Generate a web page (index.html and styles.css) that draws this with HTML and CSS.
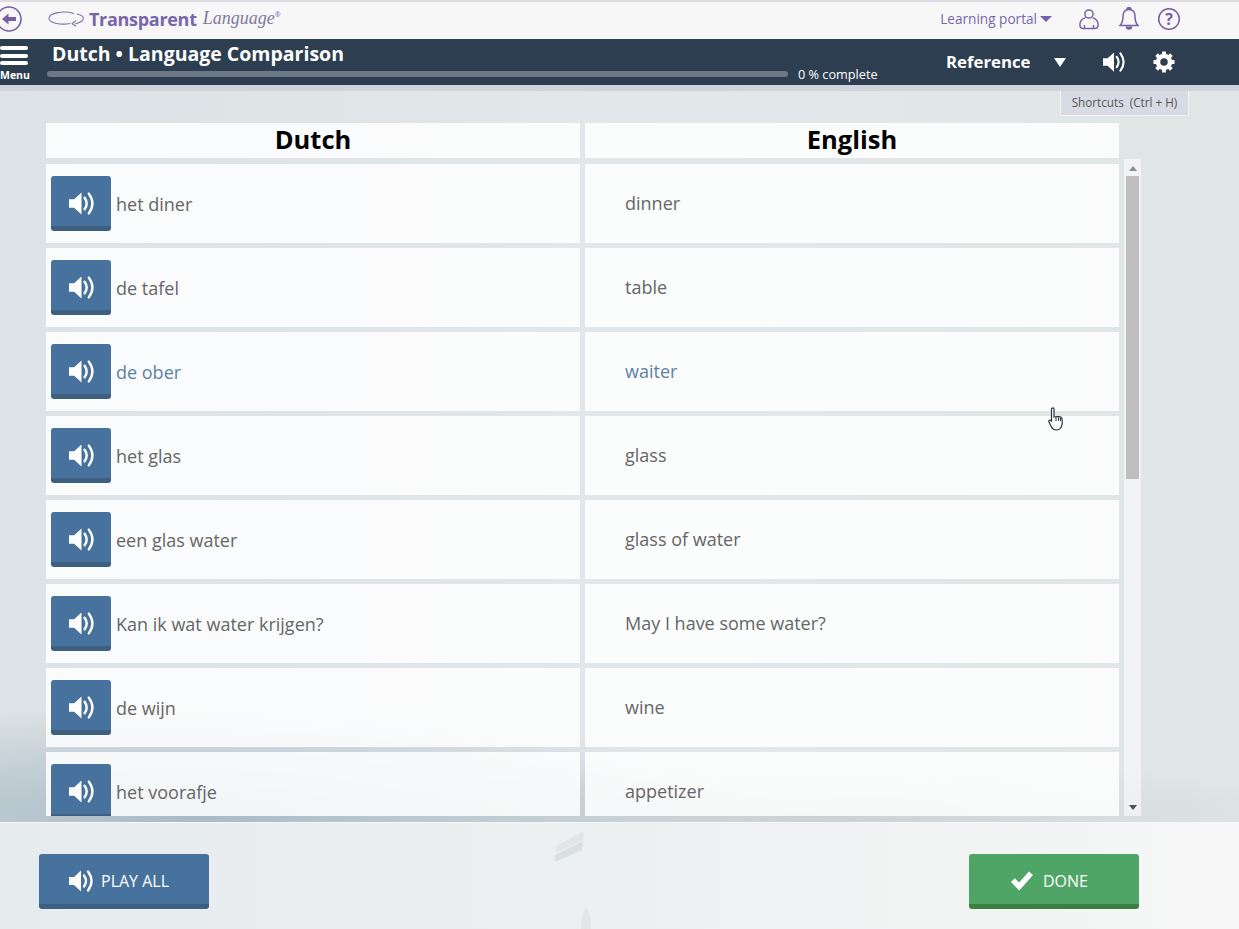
FILE: index.html
```html
<!DOCTYPE html>
<html lang="en">
<head>
	<meta charset="UTF-8">
	<title>Dutch - Language Comparison</title>
	<link rel="stylesheet" href="styles.css">
</head>
<body>
<svg class="defs" width="0" height="0">
	<symbol id="speaker" viewBox="0 0 24 24">
		<path d="M0 8h5l7-6.500v21L5 16H0z" fill="#fff"/>
		<path d="M15 6.500q4 5.500 0 11M19 2.500q7 9.500 0 19" fill="none" stroke="#fff" stroke-width="2.300" stroke-linecap="round"/>
	</symbol>
</svg>
<div class="page">
	<!-- 顶部 -->
	<header class="top">
		<a href="#" class="back">
			<svg width="24" height="28" viewBox="0 0 24 28"><circle cx="9" cy="14" r="12" fill="none" stroke="#7560a8" stroke-width="1.600"/><path d="M2 14l6.500-5.500V12H16v4H8.500v3.500z" fill="#7560a8"/></svg>
		</a>
		<div class="logo">
			<svg width="37" height="16" viewBox="0 0 37 16"><path d="M26 2.500C16-.5 1 1.500 1 7.500c0 5 13 6.500 21 5M29 3c5 1 7 3 6 5.500-1 2-4 3.500-8 4.500M28 9.500l-4 3.300 4 2.500" fill="none" stroke="#7f72ad" stroke-width="1.100"/></svg>
			<span class="logoA">Transparent</span>
			<span class="logoB">Language</span><sup>®</sup>
		</div>
		<div class="topRight">
			<a href="#" class="portal">Learning portal<i class="arrow"></i></a>
			<svg class="user" width="20" height="22" viewBox="0 0 22 24" fill="none" stroke="#7560a8" stroke-width="1.600"><circle cx="11" cy="6.500" r="4.500"/><path d="M7 10.500C3 12 1 14 1 18c0 3 1 4.500 3.500 4.500h13c2.500 0 3.500-1.500 3.500-4.500 0-4-2-6-6-7.500M6 22.500v-4M16 22.500v-4"/></svg>
			<svg class="bell" width="20" height="24" viewBox="0 0 20 24" fill="none" stroke="#7560a8" stroke-width="1.500"><path d="M10 2.500c-4 0-6 3-6 7 0 4-1 7-3 9h18c-2-2-3-5-3-9 0-4-2-7-6-7z"/><path d="M8 2.500a2 2 0 0 1 4 0M7.500 19.500a2.500 2.500 0 0 0 5 0" fill="#7560a8"/></svg>
			<svg class="q" width="24" height="24" viewBox="0 0 24 24"><circle cx="12" cy="12" r="10.300" fill="none" stroke="#7560a8" stroke-width="1.500"/><text x="12" y="17.500" class="help">?</text></svg>
		</div>
	</header>
	<!-- 标题栏 -->
	<div class="bar">
		<a href="#" class="menu"><b></b><b></b><b></b><span>Menu</span></a>
		<div class="title">
			<h1>Dutch • Language Comparison</h1>
			<div class="progress"><div class="track"></div><span>0 % complete</span></div>
		</div>
		<div class="tools">
			<span class="ref">Reference</span>
			<i class="refArrow"></i>
			<svg class="toolSound" width="22" height="22"><use href="#speaker"/></svg>
			<svg class="gear" width="22" height="22" viewBox="0 0 22 22"><circle cx="11" cy="11" r="6" fill="none" stroke="#fff" stroke-width="4.500"/><path d="M11 11V0.500M11 11V21.500M11 11H0.500M11 11H21.500M11 11L3.600 3.600M11 11L18.400 18.400M11 11L18.400 3.600M11 11L3.600 18.400" stroke="#fff" stroke-width="3.800" stroke-dasharray="0 7 4"/></svg>
		</div>
	</div>
	<div class="strip"></div>
	<div class="shortcuts">Shortcuts&nbsp; (Ctrl + H)</div>

	<!-- 内容 -->
	<main class="main">
		<div class="head">
			<div>Dutch</div>
			<div>English</div>
		</div>
		<div class="listWrap">
			<ul class="list">
				<li><div class="nl"><a href="#" class="play"><svg width="25" height="25"><use href="#speaker"/></svg></a>het diner</div><div class="en">dinner</div></li>
				<li><div class="nl"><a href="#" class="play"><svg width="25" height="25"><use href="#speaker"/></svg></a>de tafel</div><div class="en">table</div></li>
				<li class="on"><div class="nl"><a href="#" class="play"><svg width="25" height="25"><use href="#speaker"/></svg></a>de ober</div><div class="en">waiter</div></li>
				<li><div class="nl"><a href="#" class="play"><svg width="25" height="25"><use href="#speaker"/></svg></a>het glas</div><div class="en">glass</div></li>
				<li><div class="nl"><a href="#" class="play"><svg width="25" height="25"><use href="#speaker"/></svg></a>een glas water</div><div class="en">glass of water</div></li>
				<li><div class="nl"><a href="#" class="play"><svg width="25" height="25"><use href="#speaker"/></svg></a>Kan ik wat water krijgen?</div><div class="en">May I have some water?</div></li>
				<li><div class="nl"><a href="#" class="play"><svg width="25" height="25"><use href="#speaker"/></svg></a>de wijn</div><div class="en">wine</div></li>
				<li><div class="nl"><a href="#" class="play"><svg width="25" height="25"><use href="#speaker"/></svg></a>het voorafje</div><div class="en">appetizer</div></li>
			</ul>
			<div class="scrollbar">
				<i class="up"></i>
				<div class="thumbArea"><div class="thumb"></div></div>
				<i class="down"></i>
			</div>
		</div>
	</main>

	<!-- 底部按钮 -->
	<footer class="foot">
		<svg class="flag" width="40" height="107" viewBox="0 0 40 107"><path d="M5 23l28-15-1 9-27 13z" fill="#e2e5e7"/><path d="M4 32l28-14-1 9-27 12z" fill="#dadfe2"/><path d="M30 106c0-12 2-18 5-22 3 4 5 10 5 22z" fill="#e4e6e6"/></svg>
		<a href="#" class="btn blue"><svg width="24" height="24"><use href="#speaker"/></svg>PLAY ALL</a>
		<a href="#" class="btn green"><svg width="22" height="20" viewBox="0 0 22 20"><path d="M0 11l3.800-3.800 4.200 4.300L18 .5 22 4 8.300 19.500z" fill="#fff"/></svg>DONE</a>
	</footer>

	<!-- 鼠标 -->
	<svg class="cursor" width="16" height="25" viewBox="0 0 16 25"><path d="M3.500 2c0-1.500 2.500-1.500 2.500 0v8c2-.5 7.500-1 8 1.500.5 3 .5 6-.5 8-1 2-2 3.500-5 3.500-2.500 0-4-1-5-3L1 15c-.8-1.500 1-2.500 2.500-1z" fill="#fff" stroke="#2b3040" stroke-width="1.200"/><path d="M8 10v4M10.500 10.500V14M12.500 10.800V14" stroke="#2b3040"/></svg>
</div>
</body>
</html>
```
FILE: styles.css
```css
body,
h1,
ul {
	margin: 0;
	padding: 0;
}

ul {
	list-style: none;
}

a {
	text-decoration: none;
	color: inherit;
}

.defs {
	position: absolute;
}

.page {
	position: relative;
	display: flex;
	flex-direction: column;
	width: 1239px;
	height: 929px;
	overflow: hidden;
	font-family: "Open Sans", "Liberation Sans", sans-serif;
	background:
		radial-gradient(ellipse 560px 110px at 200px 815px, rgba(150, 172, 186, .75), rgba(150, 172, 186, 0)),
		radial-gradient(ellipse 500px 60px at 800px 815px, rgba(180, 188, 186, .5), rgba(180, 188, 186, 0)),
		linear-gradient(90deg, #dce2e5 0, #e2e7e9 50%, #e0e5e6 100%);
}

/* 顶部 */
.top {
	display: flex;
	align-items: center;
	flex: none;
	box-sizing: border-box;
	height: 39px;
	padding-bottom: 4px;
	border-top: 2px solid #dcdce0;
	background: #f7f7f7;
}

.back {
	display: flex;
	width: 48px;
	margin-bottom: -1px;
}

.logo {
	display: flex;
	align-items: center;
	color: #7866ab;
}

.logoA {
	margin-left: 4px;
	font-size: 18px;
	font-weight: 700;
	letter-spacing: -.3px;
}

.logoB {
	margin-left: 6px;
	font: italic 18px "Liberation Serif", serif;
	color: #807a9c;
}

.logo sup {
	margin-top: -8px;
	font-size: 7px;
}

.topRight {
	display: flex;
	align-items: center;
	margin-left: auto;
	margin-right: 58px;
}

.portal {
	display: flex;
	align-items: center;
	margin-right: 27px;
	font-size: 13.600px;
	color: #7866ab;
}

.arrow {
	margin-left: 3px;
	border-top: 6px solid #7560a8;
	border-left: 6px solid transparent;
	border-right: 6px solid transparent;
}

.user {
	margin-right: 20px;
}

.bell {
	margin-right: 18px;
}

.help {
	font: 700 16px "Open Sans", sans-serif;
	fill: #7560a8;
	text-anchor: middle;
}

/* 标题栏 */
.bar {
	display: flex;
	flex: none;
	height: 46px;
	color: #fff;
	background: #2d3e50;
}

.menu {
	display: flex;
	flex-direction: column;
	flex: none;
	width: 47px;
	padding-top: 7px;
	box-sizing: border-box;
}

.menu b {
	width: 28px;
	height: 4px;
	margin-bottom: 3.500px;
	border-radius: 2px;
	background: #fff;
}

.menu span {
	margin-top: -.5px;
	font-size: 10.500px;
	line-height: 15px;
	font-weight: 700;
}

.title {
	flex: none;
	width: 850px;
}

.title h1 {
	margin: 1px 0 0 5px;
	font-size: 19.500px;
	line-height: 27px;
	font-weight: 700;
}

.progress {
	display: flex;
	align-items: center;
	margin-top: -1px;
	font-size: 12.700px;
	line-height: 16px;
}

.track {
	width: 741px;
	height: 6px;
	margin-right: 10px;
	border-radius: 3px;
	background: #6c7886;
}

.tools {
	display: flex;
	align-items: center;
}

.ref {
	margin-left: 49px;
	margin-bottom: 2px;
	font-size: 16.800px;
	font-weight: 700;
}

.refArrow {
	margin-left: 23px;
	border-top: 9px solid #fff;
	border-left: 6px solid transparent;
	border-right: 6px solid transparent;
}

.toolSound {
	margin-left: 37px;
}

.gear {
	margin-left: 28px;
}

.strip {
	flex: none;
	height: 6px;
	background: #d1d3dc;
}

.shortcuts {
	position: absolute;
	left: 1060px;
	top: 91px;
	width: 129px;
	height: 25px;
	box-sizing: border-box;
	border: 1px solid #f0f1f3;
	border-top: 0;
	font-size: 11.700px;
	line-height: 23px;
	text-align: center;
	color: #555;
	background: #d8dbe3;
}

/* 内容 */
.main {
	flex: 1;
	min-height: 0;
	padding: 32px 0 0 46px;
}

.head {
	display: grid;
	grid-template-columns: 534px 534px;
	gap: 5px;
	height: 35px;
}

.head div {
	font-size: 25.500px;
	line-height: 33px;
	font-weight: 700;
	text-align: center;
	color: #000;
	background: rgba(255, 255, 255, .85);
}

.listWrap {
	display: flex;
	height: 657px;
	margin-top: 1px;
}

.list {
	height: 652px;
	margin-top: 5px;
	overflow: hidden;
}

.list li {
	display: grid;
	grid-template-columns: 534px 534px;
	gap: 5px;
	height: 79px;
	margin-bottom: 5px;
	font-size: 18px;
	color: #666;
}

.list li > div {
	display: flex;
	align-items: center;
	background: rgba(255, 255, 255, .85);
}

.list .on {
	color: #5a82a6;
}

.nl {
	padding-left: 5px;
}

.en {
	padding-left: 40px;
	padding-bottom: 2px;
	box-sizing: border-box;
}

.play {
	display: flex;
	align-items: center;
	justify-content: center;
	box-sizing: border-box;
	width: 60px;
	height: 55px;
	margin-right: 5px;
	padding-top: 5px;
	border-bottom: 5px solid #3d5f80;
	border-radius: 3px;
	background: #47729d;
}

/* 滚动条 */
.scrollbar {
	display: flex;
	flex-direction: column;
	align-items: center;
	box-sizing: border-box;
	width: 17px;
	height: 657px;
	margin-left: 5px;
	background: rgba(255, 255, 255, .55);
}

.up {
	margin: 7px 0 5px;
	border-bottom: 5px solid #8c8c8c;
	border-left: 4px solid transparent;
	border-right: 4px solid transparent;
}

.down {
	margin: 0 0 6px;
	border-top: 5px solid #505050;
	border-left: 4px solid transparent;
	border-right: 4px solid transparent;
}

.thumbArea {
	flex: 1;
	width: 13px;
}

.thumb {
	height: 303px;
	background: #bfbfbf;
}

/* 底部 */
.foot {
	position: relative;
	display: flex;
	justify-content: space-between;
	flex: none;
	box-sizing: border-box;
	height: 107px;
	padding: 31px 100px 0 39px;
	border-top: 1px solid #f6f7f8;
	background: linear-gradient(90deg, #e6ebee 0, #edf0f1 50%, #f6f7f6 100%);
}

/* 背景图里的旗子 */
.flag {
	position: absolute;
	left: 551px;
	top: 0;
}

.btn {
	display: flex;
	align-items: center;
	box-sizing: border-box;
	width: 170px;
	height: 55px;
	padding: 4px 0 0 30px;
	border-bottom: 5px solid #3d5f80;
	border-radius: 3px;
	font-size: 16px;
	color: #fff;
	background: #47729d;
}

.btn svg {
	margin-right: 8px;
}

.green {
	padding-left: 42px;
	border-bottom-color: #3c803f;
	background: #4fa565;
}

.green svg {
	margin-right: 10px;
}

.cursor {
	position: absolute;
	left: 1048px;
	top: 407px;
}
```
